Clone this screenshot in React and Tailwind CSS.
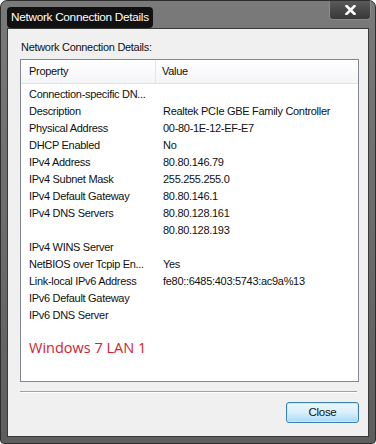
import React from 'react';

const rows = [
  ['Connection-specific DN...', ''],
  ['Description', 'Realtek PCIe GBE Family Controller'],
  ['Physical Address', '00-80-1E-12-EF-E7'],
  ['DHCP Enabled', 'No'],
  ['IPv4 Address', '80.80.146.79'],
  ['IPv4 Subnet Mask', '255.255.255.0'],
  ['IPv4 Default Gateway', '80.80.146.1'],
  ['IPv4 DNS Servers', '80.80.128.161'],
  ['', '80.80.128.193'],
  ['IPv4 WINS Server', ''],
  ['NetBIOS over Tcpip En...', 'Yes'],
  ['Link-local IPv6 Address', 'fe80::6485:403:5743:ac9a%13'],
  ['IPv6 Default Gateway', ''],
  ['IPv6 DNS Server', ''],
];

export default function App() {
  return (
    <div className="w-[376px] h-[444px] bg-white font-['Liberation_Sans',sans-serif] text-[11px] tracking-[-0.3px] text-[#111]">
      <div className="w-[376px] h-[444px] rounded-t-[7px] rounded-b-[4px] border border-[#2e2e2e] bg-gradient-to-b from-[#7a7a7a] via-[#6c6c6c] to-[#5e5e5e] flex flex-col px-[6px] pb-[6px]">
        {/* title bar */}
        <div className="h-[27px] flex items-start justify-between relative">
          <div className="mt-[6px] h-[21px] px-[4px] flex items-center rounded-[4px] bg-[#111] text-white text-[11.8px]">
            Network Connection Details
          </div>
          <div className="mr-[-2px] w-[42px] h-[19px] rounded-b-[4px] border border-t-0 border-[#8a8a8a] bg-gradient-to-b from-[#5a5a5a] to-[#383838] flex items-center justify-center">
            <svg width="11" height="10" viewBox="0 0 11 10">
              <path d="M1.5 1 L9.5 9 M9.5 1 L1.5 9" stroke="white" strokeWidth="2.6" strokeLinecap="square" />
            </svg>
          </div>
        </div>
        {/* client area */}
        <div className="flex-1 border border-[#3a3a3a] bg-[#f0f0f0] flex flex-col pl-[12px] pr-[9px]">
          <div className="mt-[11px] mb-[4px] ml-[1px] h-[15px] leading-[15px]">Network Connection Details:</div>
          <div className="h-[323px] border border-[#828790] bg-white flex flex-col">
            <div className="h-[24px] flex items-center bg-gradient-to-b from-white to-[#f4f5f7] border-b border-[#e0e3e8]">
              <div className="w-[135px] pl-[8px] h-full flex items-center border-r border-[#e3e5e9]">Property</div>
              <div className="pl-[6px]">Value</div>
            </div>
            <div className="pt-[2px] flex flex-col">
              {rows.map(([p, v], i) => (
                <div key={i} className="h-[17px] flex items-center leading-[17px]">
                  <div className="w-[142px] pl-[8px] whitespace-nowrap overflow-hidden">{p}</div>
                  <div className="whitespace-nowrap">{v}</div>
                </div>
              ))}
            </div>
            <div className="mt-[13px] pl-[8px] text-[14.5px] tracking-normal text-[#d4232e] font-['Open_Sans',sans-serif]">Windows 7 LAN 1</div>
          </div>
          <div className="mt-[9px] mr-[2px] h-[2px] border-t border-[#a0a0a0] border-b-white border-b" />
          <div className="mt-[9px] flex justify-end">
            <button className="w-[73px] h-[21px] rounded-[3px] border border-[#3c7fb1] bg-gradient-to-b from-[#eaf6fd] via-[#d9f0fc] to-[#a7d9f5] text-[11.5px] shadow-[inset_0_0_0_1px_#c7e8fb]">
              Close
            </button>
          </div>
        </div>
      </div>
    </div>
  );
}
